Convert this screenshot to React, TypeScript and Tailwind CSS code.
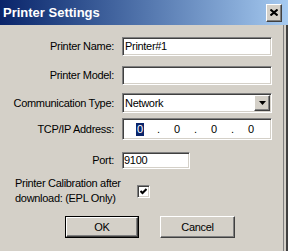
const sunken =
  "bg-white border border-t-[#808080] border-l-[#808080] border-b-white border-r-white shadow-[inset_1px_1px_0_#404040,inset_-1px_-1px_0_#d4d0c8]";
const raised =
  "bg-[#d4d0c8] border border-t-white border-l-white border-b-[#404040] border-r-[#404040] shadow-[inset_-1px_-1px_0_#808080,inset_1px_1px_0_#d4d0c8]";

function Row({ label, mt, children }: { label: string; mt: string; children: React.ReactNode }) {
  return (
    <div className={`flex items-center ${mt}`}>
      <div className="w-[115px] pr-[1px] text-right whitespace-nowrap">{label}</div>
      <div className="ml-[7px] flex">{children}</div>
    </div>
  );
}

export default function App() {
  return (
    <div className="w-[288px] h-[251px] overflow-hidden bg-[#d4d0c8] font-['Liberation_Sans',Arial,sans-serif] text-[11px] tracking-[-0.3px] text-black">
      <div className="h-[25px] flex items-center justify-between pl-[3px] pr-[6px] bg-gradient-to-r from-[#0a246a] to-[#a6caf0]">
        <span className="text-white font-bold text-[13px] tracking-normal">Printer Settings</span>
        <div className={`${raised} w-[16px] h-[18px] flex items-center justify-center`}>
          <svg width="8" height="7" viewBox="0 0 8 7">
            <path d="M0.5 0.5L7.5 6.5M7.5 0.5L0.5 6.5" stroke="#000" strokeWidth="2" />
          </svg>
        </div>
      </div>
      <div className="flex h-[226px]">
        <div className="w-[283px] flex flex-col">
          <Row label="Printer Name:" mt="mt-[12px]">
            <div className={`${sunken} w-[150px] h-[19px] flex items-center pl-[2px]`}>Printer#1</div>
          </Row>
          <Row label="Printer Model:" mt="mt-[10px]">
            <div className={`${sunken} w-[150px] h-[19px]`} />
          </Row>
          <Row label="Communication Type:" mt="mt-[8px]">
            <div className={`${sunken} w-[150px] h-[20px] flex items-center justify-between pl-[2px] pr-[1px]`}>
              <span>Network</span>
              <div className={`${raised} w-[16px] h-[16px] flex items-center justify-center`}>
                <svg width="7" height="4" viewBox="0 0 7 4">
                  <path d="M0 0H7L3.5 4Z" fill="#000" />
                </svg>
              </div>
            </div>
          </Row>
          <Row label="TCP/IP Address:" mt="mt-[5px]">
            <div className={`${sunken} w-[150px] h-[22px] flex items-center`}>
              <div className="w-[34px] flex justify-center">
                <span className="bg-[#0a246a] text-white leading-[13px] px-[1px]">0</span>
              </div>
              <div className="w-[3px] text-center">.</div>
              <div className="w-[34px] text-center">0</div>
              <div className="w-[3px] text-center">.</div>
              <div className="w-[34px] text-center">0</div>
              <div className="w-[3px] text-center">.</div>
              <div className="w-[34px] text-center">0</div>
            </div>
          </Row>
          <Row label="Port:" mt="mt-[12px]">
            <div className={`${sunken} w-[68px] h-[17px] flex items-center pl-[1px]`}>9100</div>
          </Row>
          <div className="flex items-center mt-[7px]">
            <div className="pl-[15px] w-[137px] leading-[15px] whitespace-nowrap">
              Printer Calibration after
              <br />
              download: (EPL Only)
            </div>
            <div className={`${sunken} w-[13px] h-[13px] flex items-center justify-center`}>
              <svg width="7" height="7" viewBox="0 0 7 7">
                <path d="M0.5 3L2.5 5L6.5 1" stroke="#000" strokeWidth="2" fill="none" />
              </svg>
            </div>
          </div>
          <div className="flex mt-[10px] pl-[65px] gap-[21px]">
            <div className="w-[74px] h-[22px] border border-black">
              <div className={`${raised} w-full h-full flex items-center justify-center`}>OK</div>
            </div>
            <div className={`${raised} w-[75px] h-[22px] flex items-center justify-center`}>Cancel</div>
          </div>
        </div>
        <div className="flex-1 border-l border-[#808080] border-r-[2px] border-r-[#404040] bg-[#d4d0c8]" />
      </div>
    </div>
  );
}
